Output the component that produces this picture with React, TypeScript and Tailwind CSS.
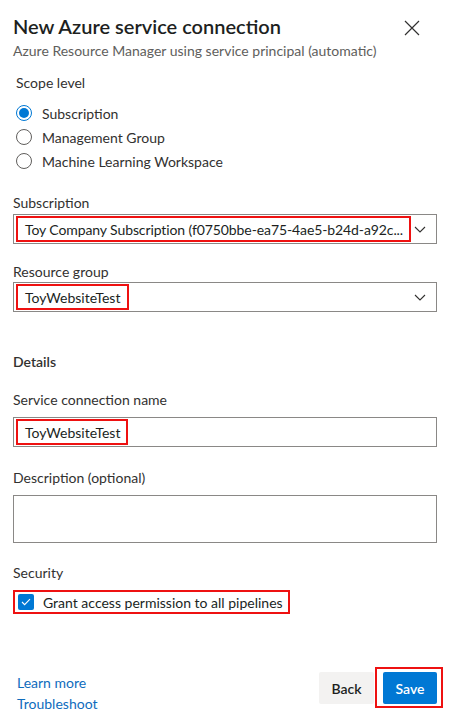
import React from "react";

const font = { fontFamily: 'Lato, "Noto Sans", Arial, sans-serif' };

function Chevron() {
  return (
    <svg width="12" height="7" viewBox="0 0 12 7" className="shrink-0">
      <path d="M1 1l5 5 5-5" fill="none" stroke="#323130" strokeWidth="1.1" />
    </svg>
  );
}

function Radio({ checked, label }: { checked?: boolean; label: string }) {
  return (
    <div className="flex h-[24px] items-center">
      {checked ? (
        <span className="flex h-[16px] w-[16px] items-center justify-center rounded-full border border-[#0078d4]">
          <span className="h-[10px] w-[10px] rounded-full bg-[#0078d4]" />
        </span>
      ) : (
        <span className="h-[16px] w-[16px] rounded-full border border-[#605e5c]" />
      )}
      <span className="ml-[10px] whitespace-nowrap text-[14px] text-[#323130]">{label}</span>
    </div>
  );
}

function Label({ children, className = "" }: { children: React.ReactNode; className?: string }) {
  return <div className={"h-[20px] whitespace-nowrap text-[14px] leading-[20px] text-[#323130] " + className}>{children}</div>;
}

export default function App() {
  return (
    <div className="relative h-[723px] w-[450px] overflow-hidden bg-white" style={font}>
      <div className="px-[13px] pt-[13px]">
        {/* header */}
        <div className="flex items-start justify-between">
          <div>
            <div className="h-[26px] whitespace-nowrap text-[20px] font-semibold leading-[26px] text-[#201f1e]">
              New Azure service connection
            </div>
            <div className="mt-[3px] h-[18px] whitespace-nowrap text-[14px] leading-[18px] text-[#605e5c]">
              Azure Resource Manager using service principal (automatic)
            </div>
          </div>
          <button className="mr-[17px] mt-[7px]">
            <svg width="16" height="16" viewBox="0 0 16 16">
              <path d="M1 1l14 14M15 1L1 15" stroke="#323130" strokeWidth="1.2" />
            </svg>
          </button>
        </div>

        {/* scope */}
        <div className="ml-[3px] mt-[13px]">
          <Label>Scope level</Label>
          <div className="mt-[8px]">
            <Radio checked label="Subscription" />
            <Radio label="Management Group" />
            <Radio label="Machine Learning Workspace" />
          </div>
        </div>

        {/* subscription */}
        <Label className="mt-[20px]">Subscription</Label>
        <div className="mt-[1px] flex h-[30px] w-[424px] items-center border border-[#8a8886] pl-[2px] pr-[10px]">
          <span className="flex h-[26px] w-[395px] items-center whitespace-nowrap border-2 border-[#ee1111] pl-[7px] text-[14px] tracking-[-0.1px] text-[#201f1e]">
            Toy Company Subscription (f0750bbe-ea75-4ae5-b24d-a92c...
          </span>
          <span className="ml-auto">
            <Chevron />
          </span>
        </div>

        {/* resource group */}
        <Label className="mt-[18px]">Resource group</Label>
        <div className="flex h-[30px] w-[424px] items-center border border-[#8a8886] pl-[2px] pr-[10px]">
          <span className="flex h-[26px] w-[113px] items-center border-2 border-[#ee1111] pl-[7px] text-[14px] text-[#201f1e]">
            ToyWebsiteTest
          </span>
          <span className="ml-auto">
            <Chevron />
          </span>
        </div>

        {/* details */}
        <Label className="mt-[40px] font-semibold">Details</Label>
        <Label className="mt-[18px]">Service connection name</Label>
        <div className="mt-[7px] flex h-[30px] w-[424px] items-center border border-[#8a8886] pl-[2px]">
          <span className="flex h-[26px] w-[112px] items-center border-2 border-[#ee1111] pl-[7px] text-[14px] text-[#201f1e]">
            ToyWebsiteTest
          </span>
        </div>

        <Label className="mt-[21px]">Description (optional)</Label>
        <div className="mt-[7px] h-[48px] w-[424px] border border-[#8a8886]" />

        {/* security */}
        <Label className="mt-[20px]">Security</Label>
        <div className="mt-[7px] flex h-[24px] w-[277px] items-center border-2 border-[#ee1111] pl-[3px]">
          <span className="flex h-[16px] w-[16px] shrink-0 items-center justify-center rounded-[2px] bg-[#0078d4]">
            <svg width="10" height="8" viewBox="0 0 10 8">
              <path d="M1 4l2.6 2.6L9 1.2" fill="none" stroke="#fff" strokeWidth="1.1" />
            </svg>
          </span>
          <span className="ml-[9px] whitespace-nowrap text-[14px] text-[#201f1e]">
            Grant access permission to all pipelines
          </span>
        </div>
      </div>

      {/* footer */}
      <div className="mt-[53px] flex items-start justify-between pl-[17px] pr-[7px]">
        <div className="pt-[5px] text-[14px] leading-[21px] text-[#0f6cbd]">
          <div>Learn more</div>
          <div>Troubleshoot</div>
        </div>
        <div className="flex items-start">
          <button className="mt-[5px] h-[32px] w-[55px] rounded-[2px] bg-[#f3f2f1] text-[14px] font-semibold text-[#201f1e]">
            Back
          </button>
          <div className="ml-[1px] border-2 border-[#ee1111] pb-[2px] pl-[6px] pr-[4px] pt-[3px]">
            <button className="h-[32px] w-[54px] rounded-[2px] bg-[#0078d4] text-[14px] font-semibold text-white">
              Save
            </button>
          </div>
        </div>
      </div>
    </div>
  );
}
